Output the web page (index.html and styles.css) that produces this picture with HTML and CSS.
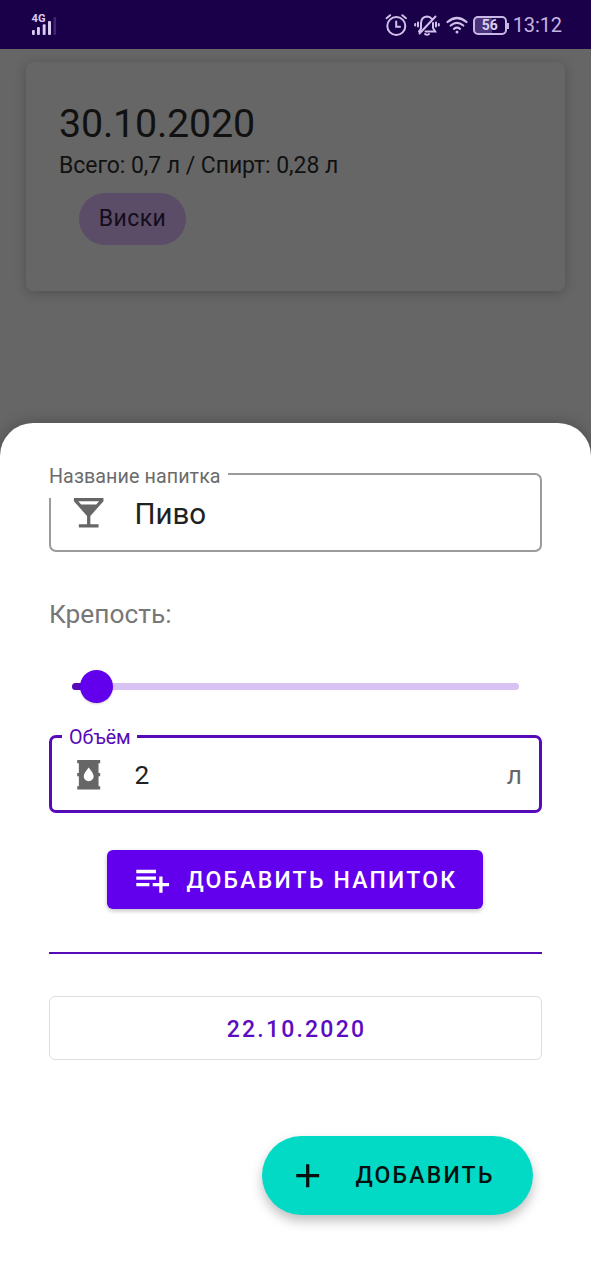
FILE: index.html
```html
<!DOCTYPE html>
<html lang="ru">
<head>
<meta charset="utf-8">
<title>Напитки</title>
<link rel="stylesheet" href="styles.css">
</head>
<body>
<header class="status">
  <svg class="signal" width="28" height="24" viewBox="0 0 28 24">
    <text class="signal-label" x="1.6" y="9" textLength="14" lengthAdjust="spacingAndGlyphs">4G</text>
    <g fill="#d9cdf0"><rect x="2" y="17" width="2.8" height="5" rx="1"/><rect x="7" y="14" width="2.9" height="8" rx="1"/><rect x="12.700" y="11.300" width="2.900" height="10.700" rx="1"/><rect x="18" y="8" width="3" height="14" rx="1"/></g>
    <rect x="23.500" y="4" width="2.600" height="18" rx="1" fill="#402576"/>
  </svg>
  <div class="status-right">
    <svg width="24" height="24" viewBox="0 0 24 24" fill="none" stroke="#d0c0ea" stroke-width="2" stroke-linecap="round">
      <circle cx="12.300" cy="13" r="9"/><path d="M12.200 8.500v5.300h3.800M2.500 5.200l3.700-3M22 5.200l-3.700-3"/>
    </svg>
    <svg class="bell" width="26" height="24" viewBox="0 0 26 24" fill="none" stroke="#d0c0ea" stroke-width="2" stroke-linecap="round">
      <path d="M7 15.500V10.500C7 6.500 9 3.900 13 3.500c2.300.1 3.700.9 4.800 2.300M19 10v5l2.200 3.500H11.500M7 15.500L5 18.500M21.500 3.500L5.500 20.500M11 21q2 1.600 4 0"/>
      <path d="M4 9.500v4M1.200 11v1.500M22 9.500v4M24.800 11v1.500"/>
    </svg>
    <svg class="wifi" width="22" height="18" viewBox="0 0 22 18" fill="none" stroke="#d0c0ea" stroke-width="2.200" stroke-linecap="round">
      <path d="M1.500 6Q11-2 20.500 6M4.700 9.500Q11 4.200 17.300 9.500M8 12.800Q11 10.400 14 12.800"/><circle cx="11" cy="15.900" r="1.500" fill="#d0c0ea" stroke="none"/>
    </svg>
    <div class="battery"><span class="battery-value">56</span></div>
    <span class="clock">13:12</span>
  </div>
</header>

<main class="history">
  <article class="card">
    <h1 class="card-date">30.10.2020</h1>
    <p class="card-total">Всего: 0,7 л / Спирт: 0,28 л</p>
    <span class="chip">Виски</span>
  </article>
</main>

<section class="sheet">
  <div class="field field-name">
    <span class="label label-name">Название напитка</span>
    <svg class="icon" viewBox="0 0 24 24"><path d="M21 5V3H3v2l8 9v5H6v2h12v-2h-5v-5l8-9zM7.430 7L5.660 5h12.690l-1.780 2H7.430z"/></svg>
    <span class="value value-name">Пиво</span>
  </div>
  <p class="strength">Крепость:</p>
  <div class="slider"><div class="slider-fill"></div><div class="slider-thumb"></div></div>
  <div class="field field-volume">
    <span class="label label-volume">Объём</span>
    <svg class="icon" viewBox="0 0 24 24"><path fill-rule="evenodd" d="M18 19h1v2H5v-2h1v-6H5v-2h1V5H5V3h14v2h-1v6h1v2h-1v6M9 13c0 1.660 1.340 3 3 3s3-1.340 3-3c0-2-3-5.370-3-5.370S9 11 9 13z"/></svg>
    <span class="value">2</span>
    <span class="suffix">л</span>
  </div>
  <button class="add-drink">
    <svg class="icon" viewBox="0 0 24 24"><path d="M14 10H2v2h12v-2zm0-4H2v2h12V6zm4 8v-4h-2v4h-4v2h4v4h2v-4h4v-2h-4zM2 16h8v-2H2v2z"/></svg>
    <span class="caption">ДОБАВИТЬ НАПИТОК</span>
  </button>
  <div class="divider"></div>
  <button class="date">22.10.2020</button>
  <button class="fab">
    <svg class="icon" viewBox="0 0 24 24"><path d="M19 13h-6v6h-2v-6H5v-2h6V5h2v6h6v2z"/></svg>
    <span class="caption">ДОБАВИТЬ</span>
  </button>
</section>
</body>
</html>
```
FILE: styles.css
```css
* { box-sizing: border-box; }
body {
  margin: 0;
  width: 591px;
  height: 1280px;
  overflow: hidden;
  display: flex;
  flex-direction: column;
  background: #666;
  font-family: Roboto, sans-serif;
}
h1, p { margin: 0; font-weight: 400; }
button { border: 0; margin: 0; font: 500 23px/30px Roboto, sans-serif; letter-spacing: 2.2px; }

.status {
  flex: none;
  height: 49px;
  padding: 1px 29px 0 30px;
  display: flex;
  align-items: center;
  justify-content: space-between;
  background: #190048;
}
.signal-label { font: 700 10px Roboto, sans-serif; fill: #d9cdf0; }
.status-right { display: flex; align-items: center; }
.bell { margin-left: 6px; }
.wifi { margin-left: 6px; }
.battery {
  position: relative;
  width: 34px;
  height: 19px;
  margin: 0 6px 0 5px;
  border: 2px solid #c9b8e6;
  border-radius: 5px;
  background: linear-gradient(90deg, #4b3479 55%, #190048 55%);
  text-align: center;
}
.battery::after {
  content: "";
  position: absolute;
  right: -4px;
  top: 5px;
  width: 2px;
  height: 6px;
  background: #c9b8e6;
}
.battery-value { display: block; font: 700 14px/15px Roboto, sans-serif; color: #d9cdf0; }
.clock { font-size: 20px; line-height: 24px; letter-spacing: -.1px; color: #c5b4e2; }

.history { flex: none; height: 374px; padding: 13px 26px 0; }
.card {
  height: 229px;
  padding: 39px 33px 0;
  border-radius: 7px;
  background: #666;
  box-shadow: 0 2px 12px rgba(0, 0, 0, .22);
  color: #111;
}
.card-date { font-size: 39.4px; line-height: 46px; letter-spacing: -.2px; }
.card-total { font-size: 23px; line-height: 28px; margin-top: 5px; letter-spacing: -.06px; }
.chip {
  display: block;
  width: 107px;
  height: 52px;
  margin: 13px 0 0 20px;
  border-radius: 26px;
  background: #5b4c68;
  color: #140d1c;
  font-size: 23px;
  line-height: 52px;
  letter-spacing: .4px;
  text-align: center;
}

.sheet {
  flex: 1;
  display: flex;
  flex-direction: column;
  padding: 50px 49px 0;
  border-radius: 33px 33px 0 0;
  background: #fff;
  box-shadow: 0 0 16px rgba(0, 0, 0, .25);
}
.icon { flex: none; width: 39.4px; height: 39.4px; fill: #666; }
.field {
  position: relative;
  flex: none;
  width: 493px;
  height: 79px;
  display: flex;
  align-items: center;
  border-radius: 7px;
}
.field .icon { position: relative; }
.field-name { border: 2px solid #9b9b9b; padding: 0 18px; }
.field-volume { height: 78px; border: 3.300px solid #560ab8; padding: 1px 17px 0; margin-top: 31px; }
.label { position: absolute; background: #fff; font-size: 19.7px; white-space: nowrap; }
.label-name {
  left: -2px;
  top: -12px;
  width: 179px;
  height: 35px;
  line-height: 28px;
  letter-spacing: .08px;
  color: #6b6b6b;
}
.label-volume { left: 10px; top: -14px; width: 75px; padding-left: 7px; line-height: 28px; color: #560ab8; }
.value { margin-left: 26px; padding-top: 1px; font-size: 26.300px; color: #212121; }
.value-name { font-size: 29.500px; padding-top: 2px; }
.suffix { margin-left: auto; padding-top: 1px; font-size: 26.300px; color: #666; }
.strength { margin-top: 46px; font-size: 26.300px; line-height: 32px; color: #777; }
.slider {
  position: relative;
  flex: none;
  width: 447px;
  height: 7px;
  margin: 53px 0 14px 23px;
  border-radius: 4px;
  background: #d7c2f3;
}
.slider-fill { width: 24px; height: 7px; border-radius: 4px; background: #560ab8; }
.slider-thumb {
  position: absolute;
  left: 8px;
  top: -13px;
  width: 33px;
  height: 33px;
  border-radius: 50%;
  background: #6200ee;
  box-shadow: 0 1px 2px rgba(0, 0, 0, .2);
}
.add-drink {
  flex: none;
  width: 376px;
  height: 59px;
  margin: 37px 0 0 58px;
  padding: 0 26px;
  display: flex;
  align-items: center;
  gap: 14px;
  border-radius: 6px;
  background: #6200ee;
  color: #fff;
  white-space: nowrap;
  box-shadow: 0 2px 4px rgba(0, 0, 0, .24);
}
.caption { padding-top: 2px; }
.add-drink .icon { fill: #fff; }
.divider { flex: none; height: 1.600px; margin-top: 43px; background: #560ab8; }
.date {
  flex: none;
  height: 64px;
  margin-top: 42.4px;
  padding: 4px 0 0 2px;
  border: 1.600px solid #dedede;
  border-radius: 6px;
  background: #fff;
  color: #5c0cc2;
}
.fab {
  flex: none;
  align-self: flex-end;
  width: 271px;
  height: 79px;
  margin: 76px 9px 0 0;
  padding: 0 26px;
  display: flex;
  align-items: center;
  gap: 28px;
  border-radius: 40px;
  background: #03dac5;
  color: #06110f;
  box-shadow: 0 6px 12px rgba(0, 0, 0, .25);
}
.fab .icon { fill: #06110f; }
```
